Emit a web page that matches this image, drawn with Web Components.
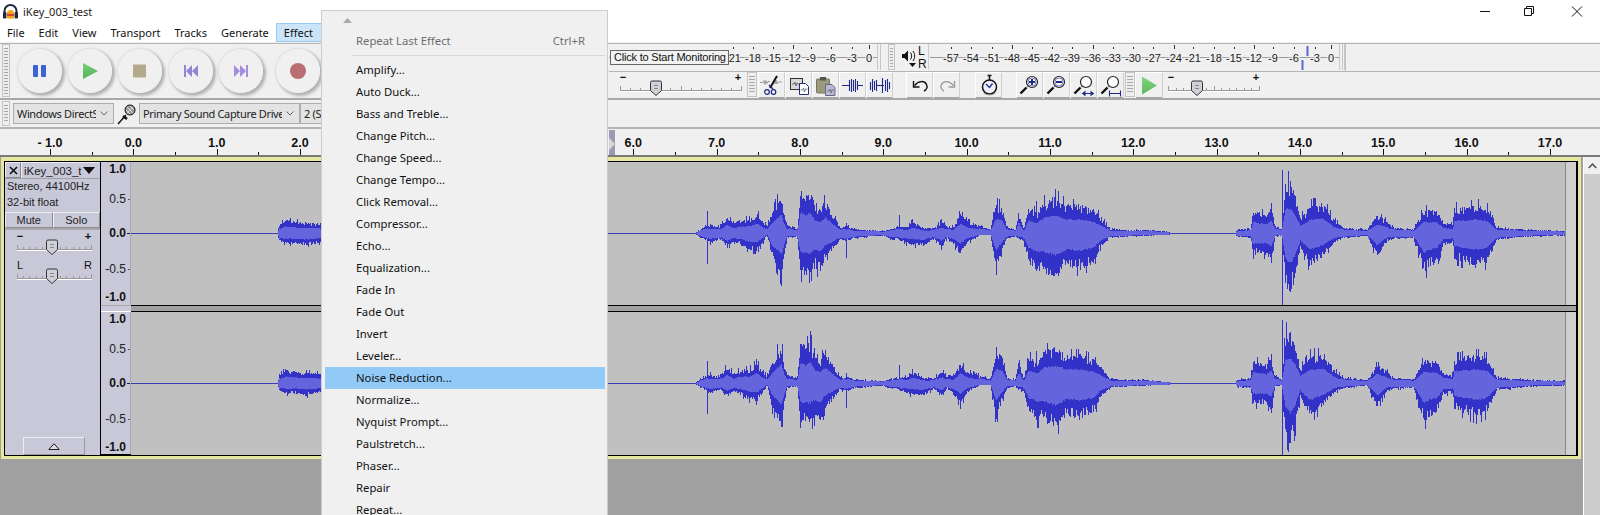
<!DOCTYPE html>
<html><head><meta charset="utf-8"><title>iKey_003_test</title>
<style>
html,body{margin:0;height:100%;overflow:hidden;background:#a0a0a0}
body{font-family:"Liberation Sans",sans-serif}
</style></head>
<body>
<au-app></au-app>
<script>
const UI='"Noto Sans","Open Sans",sans-serif';
const AR='"Liberation Sans",Arial,sans-serif';
class Base extends HTMLElement{
  constructor(){super();this.attachShadow({mode:'open'}).innerHTML=this.render();}
  render(){return '';}
  attr(n,d){return this.hasAttribute(n)?this.getAttribute(n):d;}
}
class AuGrip extends Base{render(){return `<style>
:host{display:block;box-sizing:border-box;width:8px;border:1px solid #c4c4c4;background:#f0f0f0 repeating-linear-gradient(180deg,#a8a8a8 0 1px,#ececec 1px 3px);background-clip:content-box;padding:2px 1px}
</style>`;}}
class AuTitlebar extends Base{render(){return `<style>
:host{display:flex;align-items:center;height:23px;background:#fff;font:11px ${UI};color:#222}
svg{display:block;margin:0 5px 0 3px}
.win{margin-left:auto;display:flex}
.win svg{margin:0;width:46px;height:23px}
</style>
<svg width="15" height="16" viewBox="0 0 15 16"><path d="M1.500 11V7a6 6 0 0 1 12 0v4" fill="none" stroke="#1c2742" stroke-width="2"/><rect x="0" y="8" width="3.400" height="6.500" rx="1.200" fill="#1c2742"/><rect x="11.600" y="8" width="3.400" height="6.500" rx="1.200" fill="#1c2742"/><path d="M4 14.500V9c0-2 1.500-3 3.500-3s3.500 1 3.500 3v5.500z" fill="#f6a21a"/><rect x="4" y="10" width="7" height="2" fill="#d8402a"/></svg>
<span>iKey_003_test</span>
<div class="win">
<svg viewBox="0 0 46 23"><path d="M18 11.500h10" stroke="#111"/></svg>
<svg viewBox="0 0 46 23"><path d="M16.500 8.500h7v7h-7zM18.500 8.500v-2h7v7h-2" fill="none" stroke="#111"/></svg>
<svg viewBox="0 0 46 23"><path d="M18 6.500l10 10M28 6.500l-10 10" stroke="#111" fill="none"/></svg>
</div>`;}}
class AuMenubar extends Base{render(){
  const it=['File','Edit','View','Transport','Tracks','Generate','Effect'];
  return `<style>
:host{display:flex;height:19px;background:#fff;font:11px ${UI};color:#111}
span{box-sizing:border-box;display:flex;align-items:center;height:19px;padding:0 7px}
span.on{background:#cce4f7;border:1px solid #99c9ef;padding:0 7px;width:46px}
</style>${it.map(t=>`<span class="${t==='Effect'?'on':''}">${t}</span>`).join('')}`;}}
class AuTransportBtn extends Base{render(){return `<style>
:host{display:block;width:44px;height:44px;border-radius:50%;background:radial-gradient(circle at 48% 48%,#f0f0f0 0 66%,#e8e8e8 82%,#dcdcdc 100%);box-shadow:2px 2px 3px 1px #b2b2b2,-1px -1px 2px #e2e2e2;position:relative}
::slotted(svg){position:absolute;left:0;top:0;width:44px;height:44px}
</style><slot></slot>`;}}
class AuTransport extends Base{render(){return `<style>
:host{display:flex;align-items:center;width:609px;flex:none;height:54px;box-sizing:border-box}
au-grip{height:53px;margin:0 8px 0 2px;align-self:flex-start}
au-transport-btn{margin-right:6px}
</style>
<au-grip></au-grip>
<au-transport-btn><svg viewBox="0 0 44 44"><rect x="15" y="16" width="5" height="12" rx=".8" fill="#3b62d6"/><rect x="23" y="16" width="5" height="12" rx=".8" fill="#3b62d6"/></svg></au-transport-btn>
<au-transport-btn><svg viewBox="0 0 44 44"><defs><linearGradient id="g" x1="0" y1="0" x2="0" y2="1"><stop offset="0" stop-color="#7bcf78"/><stop offset="1" stop-color="#52b257"/></linearGradient></defs><path d="M15 14l15 8-15 8z" fill="url(#g)"/></svg></au-transport-btn>
<au-transport-btn style="margin-right:7px"><svg viewBox="0 0 44 44"><rect x="15" y="15.500" width="13" height="13" fill="#b5a98c"/></svg></au-transport-btn>
<au-transport-btn><svg viewBox="0 0 44 44"><path d="M15 16h2v12h-2zM23 16v12l-6-6zM29 16v12l-6-6z" fill="#9184d4"/></svg></au-transport-btn>
<au-transport-btn style="margin-right:13px"><svg viewBox="0 0 44 44"><path d="M15 16v12l6-6zM21 16v12l6-6zM27 16h2v12h-2z" fill="#a48ce0"/></svg></au-transport-btn>
<au-transport-btn><svg viewBox="0 0 44 44"><circle cx="22" cy="22" r="8" fill="#b96f72"/></svg></au-transport-btn>`;}}
class AuMeter extends Base{render(){
  const w=+this.attr('w',260), labels=JSON.parse(this.attr('labels','[]'));
  let s='';
  labels.forEach(([t,x])=>{
    const maj=(parseInt(t)%12===0);
    s+=`<path d="M${x+.5} ${maj?1:3}v${maj?4:2}" stroke="#333"/>`;
  });
  labels.forEach(([t,x])=>{s+=`<text x="${x}" y="17.500" text-anchor="middle" paint-order="stroke" stroke="#f0f0f0" stroke-width="2.500">${t}</text>`;});
  const extra=this.attr('marks','');
  return `<style>:host{display:block;height:26px;flex:none;width:${w}px}svg{display:block}text{font:11px ${AR};fill:#222}</style>
<svg width="${w}" height="26"><path d="M0 13.500H${w}" stroke="#9a9a9a"/>${s}${extra}</svg>`;}}
class AuSlider extends Base{render(){
  const w=+this.attr('w',120),th=+this.attr('thumb',36),a=this.attr('a','−'),b=this.attr('b','+'),ins=+this.attr('ins',2),h=26,wt=this.attr('wt','bold');
  let t='';const n=12;for(let i=0;i<=n;i++){const x=Math.round(ins+i*(w-2*ins-1)/n)+.5;t+=`<path d="M${x} ${i%6==0?14:16}V18" stroke="#9a9a9a"/>`;}
  return `<style>:host{display:block;flex:none;width:${w}px;height:${h}px}svg{display:block}text{font:${wt} 11px ${AR};fill:#111}</style>
<svg width="${w}" height="${h}"><text x="${ins+3}" y="9" text-anchor="middle">${a}</text><text x="${w-ins-4}" y="9" text-anchor="middle">${b}</text>
<path d="M${ins} 18.500H${w-ins}" stroke="#9a9a9a"/><path d="M${ins} 19.500H${w-ins}" stroke="#fff"/>${t}
<path d="M${th-5.500} 10.500q0-1.500 1.500-1.500h8q1.500 0 1.500 1.500v8l-5.500 5-5.500-5z" fill="#cfcfd8" stroke="#333"/><path d="M${th-2} 13.500h4M${th-2} 16.500h4" stroke="#888"/></svg>`;}}
class AuToolBtn extends Base{render(){return `<style>
:host{display:block;flex:none;box-sizing:border-box;width:27px;height:27px;background:#f0f0f0;border-top:1px solid #fff;border-left:1px solid #fff;border-right:1px solid #cfcfcf;border-bottom:2px solid #a6a6a6}
::slotted(svg){display:block;width:25px;height:24px}
</style><slot></slot>`;}}
const NV='#1f2a86';
const glass=(inner,extra='')=>`<svg viewBox="0 0 25 24" fill="none"><path d="M3.500 20.500l6-6" stroke="#111" stroke-width="2.400"/><path d="M10 14l2 -2" stroke="#999" stroke-width="1.500"/><circle cx="15" cy="9" r="5.500" fill="#fff" stroke="#222" stroke-width="1.200"/>${inner}${extra}</svg>`;
class AuTools extends Base{render(){return `<style>
:host{display:flex;align-items:flex-start;height:27px;flex:none}
.sp{flex:none}
au-grip{height:25px;width:10px}
</style>
<div class="sp" style="width:10px"></div>
<au-slider w="124" thumb="37" ins="1"></au-slider>
<div class="sp" style="width:4px"></div>
<au-grip></au-grip>
<div class="sp" style="width:1px"></div>
<au-tool-btn><svg viewBox="0 0 25 24" fill="none"><path d="M1 9.500h3l1-2 1 4 1-4 1 3 1-2h2M15 8l1 3 1-4 1 4 1-2h4" stroke="#888" stroke-width=".8"/><path d="M18 3l-7 12" stroke="#111" stroke-width="2"/><path d="M10 12l4 4" stroke="${NV}" stroke-width="1.500"/><circle cx="8" cy="19" r="2.300" stroke="${NV}" stroke-width="1.200"/><circle cx="14.500" cy="19" r="2.300" stroke="${NV}" stroke-width="1.200"/></svg></au-tool-btn>
<au-tool-btn><svg viewBox="0 0 25 24"><rect x="4.500" y="5.500" width="12" height="11" fill="#d8d8d8" stroke="#333"/><path d="M6 11h2l1-2 1 4 1-3 1 1h3" stroke="#555" fill="none" stroke-width=".8"/><path d="M13.500 10.500h6l3 3v8h-9z" fill="#fff" stroke="${NV}"/><path d="M14.500 17h2l1-2 1 4 1-3h2" stroke="#566" fill="none" stroke-width=".8"/></svg></au-tool-btn>
<au-tool-btn><svg viewBox="0 0 25 24"><rect x="3.500" y="6" width="13" height="14" rx="1" fill="#9c9a7e" stroke="#77755f"/><rect x="7" y="4" width="6" height="3.500" fill="#55554a"/><path d="M12.500 11.500h6.500l3 3v8h-9.500z" fill="#b9b9cf" stroke="#66668a"/><path d="M14 18h2l1-2 1 4 1-3h2" stroke="#667" fill="none" stroke-width=".8"/></svg></au-tool-btn>
<au-tool-btn><svg viewBox="0 0 25 24" fill="none" stroke="${NV}"><path d="M2 12.500h7M17 12.500h6M9.500 7v11M11.500 6v13M13.500 7v11M15.500 6v13M17.500 8v9" stroke-width="1.100"/></svg></au-tool-btn>
<au-tool-btn><svg viewBox="0 0 25 24" fill="none" stroke="${NV}"><path d="M9 12.500h8" stroke-width="1.100"/><path d="M3.500 9v8M5.500 6v13M7.500 8v9M9.500 7v11M15.500 5v15M18.500 7v11M20.500 6v13M22.500 9v7" stroke-width="1.100"/></svg></au-tool-btn>
<div class="sp" style="width:13px"></div>
<au-tool-btn><svg viewBox="0 0 25 24" fill="none"><path d="M7.500 12.500c4-5 10-5 12-1 1.500 3-.5 5.500-2.500 6.500" stroke="#111" stroke-width="1.500"/><path d="M6.500 8v6h6" stroke="#111" stroke-width="1.400"/></svg></au-tool-btn>
<au-tool-btn><svg viewBox="0 0 25 24" fill="none"><path d="M19.500 12.500c-4-5-10-5-12-1-1.500 3 .5 5.500 2.500 6.500" stroke="#999" stroke-width="1.400"/><path d="M20.500 8v6h-6" stroke="#999" stroke-width="1.300"/></svg></au-tool-btn>
<div class="sp" style="width:15px"></div>
<au-tool-btn><svg viewBox="0 0 25 24" fill="none"><circle cx="13.500" cy="14" r="7" fill="#eef" stroke="#111" stroke-width="1.500"/><path d="M15.500 2.500h-4M13.500 3v4" stroke="#111" stroke-width="1.500"/><path d="M10 11l3.500 3.500 3-4" stroke="${NV}" stroke-width="1.300"/><path d="M7.500 20c3 2.500 9 2.500 12 0" stroke="#999"/></svg></au-tool-btn>
<div class="sp" style="width:14px"></div>
<au-tool-btn>${glass(`<path d="M12 9h6M15 6v6" stroke="${NV}" stroke-width="2"/><circle cx="15" cy="9" r="4" stroke="${NV}" stroke-width=".6" fill="none"/>`)}</au-tool-btn>
<au-tool-btn>${glass(`<path d="M12 9h6" stroke="${NV}" stroke-width="2"/><circle cx="15" cy="9" r="4" stroke="${NV}" stroke-width=".6" fill="none"/>`)}</au-tool-btn>
<au-tool-btn>${glass('',`<path d="M11 20.500h12" stroke="${NV}"/><path d="M11 20.500l3.500-3v6zM23 20.500l-3.500-3v6z" fill="${NV}" stroke="none"/>`)}</au-tool-btn>
<au-tool-btn>${glass('',`<path d="M11.500 20.500h11M11.500 17.500v6M22.500 17.500v6" stroke="${NV}" stroke-width="1.100"/>`)}</au-tool-btn>
<div class="sp" style="width:1px"></div>
<au-grip></au-grip>
<au-tool-btn style="width:28px"><svg viewBox="0 0 25 24"><defs><linearGradient id="p" x1="0" y1="0" x2="0" y2="1"><stop offset="0" stop-color="#84d680"/><stop offset="1" stop-color="#5ab85c"/></linearGradient></defs><path d="M6 3.500l15 9-15 9z" fill="url(#p)"/></svg></au-tool-btn>
<div class="sp" style="width:4px"></div>
<au-slider w="94" thumb="30" ins="1"></au-slider>`;}}
class AuMeterRow extends Base{render(){
  const recL=[['-21',124],['-18',144],['-15',164],['-12',184],['-9',202],['-6',222],['-3',243],['0',260]];
  const pl=[['-57',21],['-54',41],['-51',62],['-48',82],['-45',102],['-42',122],['-39',142],['-36',163],['-33',183],['-30',203],['-27',223],['-24',244],['-21',263],['-18',284],['-15',304],['-12',324],['-9',343],['-6',364],['-3',385],['0',401]];
  return `<style>
:host{display:flex;height:27px;flex:none;position:relative}
.tip{position:absolute;left:1px;top:6px;box-sizing:border-box;height:15px;width:119px;border:1px solid #666;background:#f2f2f2;font:11px ${AR};letter-spacing:-.2px;color:#111;line-height:13px;padding-left:3px;white-space:nowrap}
au-grip{height:26px}
.spk{flex:none;width:33px;height:26px;display:block}
.rest{flex:1;border-left:1px solid #c0c0c0}
.sep{width:1px;flex:none;background:#c8c8c8;height:26px}
</style>
<au-meter w="268" labels='${JSON.stringify(recL)}'></au-meter>
<div class="sep" style="margin-right:2px"></div><div class="sep" style="margin-right:7px"></div>
<au-grip style="width:7px;margin-right:2px"></au-grip>
<svg class="spk" viewBox="0 0 33 26"><path d="M5 10h2.500L11 6.500v11L7.500 14H5z" fill="#111"/><path d="M13.500 8.500c1.500 2 1.500 5 0 7M16 7c2.200 3 2.200 7 0 10" stroke="#111" fill="none"/><path d="M12 19h7l-3.500 4z" fill="#111"/><text x="21" y="11" font-family="Liberation Sans" font-size="12" fill="#111">L</text><text x="21" y="24" font-family="Liberation Sans" font-size="12" fill="#111">R</text><path d="M31.500 0v26" stroke="#ccc"/></svg>
<au-meter w="409" labels='${JSON.stringify(pl)}' marks='<path d="M377.500 2v10" stroke="#5c66d4" stroke-width="2"/><path d="M372.500 16v10" stroke="#5c66d4" stroke-width="2"/>'></au-meter>
<div class="sep" style="margin-right:2px"></div><div class="sep" style="margin-right:1px"></div><div class="sep"></div>
<div class="rest"></div>
<div class="tip">Click to Start Monitoring</div>`;}}
class AuCombo extends Base{render(){const w=this.attr('w','100');return `<style>
:host{display:flex;align-items:center;flex:none;box-sizing:border-box;width:${w}px;height:21px;background:#e3e3e3;border:1px solid #adadad;font:11px ${UI};letter-spacing:-.35px;color:#222;overflow:hidden;padding-left:3px;white-space:nowrap}
.t{flex:1;overflow:hidden}
svg{flex:none;margin:0 5px 0 4px}
</style><span class="t"><slot></slot></span><svg width="8" height="5" viewBox="0 0 8 5"><path d="M.5.500L4 4 7.500.500" fill="none" stroke="#666"/></svg>`;}}
class AuDevices extends Base{render(){return `<style>
:host{display:flex;align-items:center;height:27px;flex:none;border-bottom:2px solid #b4b4b4}
au-grip{height:25px;margin:0 3px 0 2px}
svg{flex:none;margin:0 3px}
</style>
<au-grip></au-grip>
<au-combo w="101">Windows DirectS</au-combo>
<svg width="19" height="22" viewBox="0 0 19 22"><path d="M1 21l8-9" stroke="#111" stroke-width="1.400"/><path d="M6 13l4 3" stroke="#111" stroke-width="2.600"/><circle cx="13" cy="7" r="5" fill="#999" stroke="#111"/><path d="M10 4l6 6M13 3l4 4M9 7l4 4M10 10l6-6" stroke="#eee" stroke-width=".7"/></svg>
<au-combo w="161">Primary Sound Capture Drive</au-combo>
<au-combo w="100">2 (S</au-combo>`;}}
class AuToolbars extends Base{render(){return `<style>
:host{display:block;background:#f0f0f0;padding-top:1px;overflow:hidden}
.top{display:flex;height:54px;border-top:1px solid #b4b4b4;border-bottom:2px solid #a8a8a8}
.rs{flex:1;display:flex;flex-direction:column}
.rs>au-meter-row{border-bottom:1px solid #b4b4b4}
</style>
<div class="top"><au-transport></au-transport><div class="rs"><au-meter-row></au-meter-row><au-tools></au-tools></div></div>
<au-devices></au-devices>`;}}
class AuRuler extends Base{render(){
  const o=133.33,s=83.33;let p='',t='';
  for(let i=-2;i<=36;i++){const x=Math.round(o+i*s/2)+.5;if(x<0||x>1590)continue;p+=`M${x} ${i%2?23:20}V26`;}
  for(let v=-1;v<=17;v++){if(v>=3&&v<=5)continue;const lab=v<0?'- 1.0':v.toFixed(1);t+=`<text x="${o+v*s}" y="18" text-anchor="middle">${lab}</text>`;}
  return `<style>:host{display:block;height:26px;background:#f0f0f0;border-bottom:2px solid #7a7a7a;position:relative}
svg{display:block}text{font:bold 12.500px ${AR};fill:#111}
.m{position:absolute;left:609px;top:1px;width:6px;height:25px;display:block}
</style><svg width="1600" height="26"><path d="${p}" stroke="#111"/>${t}</svg><svg class="m" viewBox="0 0 6 25"><rect width="6" height="25" fill="#9a9ab4"/><path d="M0 8l6 6-6 6z" fill="#d8d8d8"/></svg>`;}}
const D7=[[285,247,247],[300,235,258],[312,228,262],[330,220,280],[345,226,268],[360,225,265],[380,195,290],[400,218,272],[420,205,280],[445,205,295],[470,185,300],[490,215,270],[500,225,250],[515,185,320],[530,150,350],[543,128,380],[552,190,310],[560,220,260],[590,235,255],[601,115,370],[615,135,372],[630,115,370],[645,170,350],[660,175,365],[675,145,320],[695,185,300],[720,230,265],[738,225,272],[760,235,260],[800,238,256],[850,240,252],[870,235,262],[890,230,262],[925,225,280],[935,212,280],[970,230,285],[1000,232,262],[1025,210,290],[1040,228,260],[1060,225,280],[1080,185,310],[1100,210,275],[1140,225,250],[1170,235,250],[1187,155,355],[1205,165,300],[1220,230,260],[1245,235,255],[1255,180,265],[1270,235,270],[1285,165,340],[1310,185,360],[1330,150,360],[1365,135,385],[1400,160,345],[1440,160,355],[1480,175,335]];
const D8=[[0,195,290],[30,235,258],[100,238,254],[150,238,252],[205,243,250],[210,247,247],[405,247,247],[410,236,256],[450,234,258],[458,178,310],[500,190,310],[512,165,330],[525,225,255],[544,235,250],[555,95,400],[570,85,435],[585,130,380],[600,200,290],[630,160,350],[670,155,315],[700,205,275],[730,230,260],[800,237,252],[830,190,320],[860,210,270],[880,230,262],[940,235,260],[970,175,365],[1010,180,335],[1030,215,280],[1058,220,275],[1062,170,325],[1130,160,350],[1160,170,335],[1190,230,265],[1300,238,254],[1400,240,252]];
const KEY=[[277,0,0],[279,-8,8],[285,-14,10],[295,-12,10],[305,-11,12],[320,-10,9],[323,0,0],[694,0,0]];
D7.forEach(([x,a,b])=>KEY.push([600+x/3,(a-247)/3,(b-247)/3]));
D8.forEach(([x,a,b])=>KEY.push([1100+x/3,(a-247)/3,(b-247)/3]));
const SPIKES=[[707,-22,31],[846,-10,25],[899,-18,7],[1027,-12,14],[1282,-63,72],[1271,-29,30],[1036,-32,37]];
class AuWave extends Base{render(){
  let seed=+this.attr('seed',7);
  const rnd=()=>{seed=(seed*16807)%2147483647;return seed/2147483647;};
  const X0=131,W=1436,C=71,H=143;
  let dark='',light='';
  let k=0;
  for(let x=277;x<1567;x++){
    while(k<KEY.length-2&&KEY[k+1][0]<=x)k++;
    const [x1,a1,b1]=KEY[k],[x2,a2,b2]=KEY[k+1];
    const f=Math.min(1,Math.max(0,(x-x1)/(x2-x1||1)));
    const a0=a1+(a2-a1)*f,b0=b1+(b2-b1)*f;
    const sp=()=>{const r=rnd();return r<.12?1.18:r<.4?.68+.15*rnd():.84+.16*rnd();};
    const a=a0*sp(),b=b0*sp();
    if(-a0<.6&&b0<.6)continue;
    const big=Math.max(-a0,b0);
    const r=big>8?.47:.62;
    const ra=a0*r*(.93+.1*rnd()),rb=b0*r*(.93+.1*rnd());
    const px=x-X0+.5;
    dark+=`M${px} ${(C+a).toFixed(0)}V${(C+b+1).toFixed(0)}`;
    light+=`M${px} ${(C+ra).toFixed(0)}V${(C+rb+1).toFixed(0)}`;
  }
  SPIKES.forEach(([x,a,b])=>{dark+=`M${x-X0+.5} ${C+a}V${C+b}`;});
  return `<style>:host{display:block;height:${H}px;background:#c0c0c0;position:relative;overflow:hidden}svg{display:block}</style>
<svg width="${W}" height="${H}" shape-rendering="crispEdges"><path d="M0 ${C}.500H${W-1}" stroke="#3c3cb4"/><path d="${dark}" stroke="#3232c8"/><path d="${light}" stroke="#6464dc"/></svg>`;}}
class AuVRuler extends Base{render(){return `<style>
:host{display:block;position:relative;height:143px;width:30px;background:#c8c8d8;overflow:hidden}
svg{display:block}
text{font:12px ${AR};fill:#222;text-anchor:end}
.b{font-weight:bold;fill:#111}
</style><svg width="30" height="143"><text class="b" x="25" y="11">1.0</text><text x="25" y="41">0.5</text><path d="M27 37.500h3" stroke="#555"/>
<text class="b" x="25" y="75">0.0</text><path d="M26 71.500h4" stroke="#222"/><text x="25" y="111">-0.5</text><path d="M27 107.500h3" stroke="#555"/><text class="b" x="25" y="139">-1.0</text><path d="M29.500 0V143" stroke="#a8a8a8"/></svg>`;}}
class AuTrackInfo extends Base{render(){return `<style>
:host{display:flex;flex-direction:column;background:#c8c8d8;width:95px;height:293px;font:11px ${AR};color:#222;position:relative}
.title{display:flex;height:16px;border-bottom:1px solid #a0a0a8}
.x{box-sizing:border-box;width:16px;border:1px solid #eee;border-right-color:#888;border-bottom-color:#888;display:flex;align-items:center;justify-content:center}
.name{flex:1;display:flex;align-items:center;padding-left:2px;font-size:11.500px;border-top:1px solid #eee;border-left:1px solid #eee;box-sizing:border-box;justify-content:space-between;padding-right:5px}
.l{height:16px;line-height:15px;padding-left:2px}
.ms{display:flex;height:16px;margin-top:1px;border-bottom:2px solid #a8a8a8}
.ms span{flex:1;box-sizing:border-box;text-align:center;line-height:14px;border:1px solid #eee;border-right-color:#8c8c8c;border-bottom-color:#8c8c8c}
au-slider{margin:1px 0 0 11px;height:26px}
.col{margin-top:auto;align-self:flex-start;margin-left:18px;box-sizing:border-box;width:62px;height:18px;border:1px solid #eee;border-right-color:#999;border-bottom-color:#999;display:flex;align-items:center;justify-content:center}
</style>
<div class="title"><span class="x"><svg width="9" height="9" viewBox="0 0 9 9"><path d="M1 1l7 7M8 1L1 8" stroke="#111" stroke-width="1.600"/></svg></span><span class="name">iKey_003_t<svg width="12" height="7" viewBox="0 0 12 7"><path d="M0 0h12L6 7z" fill="#111"/></svg></span></div>
<div class="l">Stereo, 44100Hz</div><div class="l">32-bit float</div>
<div class="ms"><span>Mute</span><span>Solo</span></div>
<au-slider w="77" thumb="36" ins="1"></au-slider>
<au-slider w="77" thumb="36" ins="1" a="L" b="R" wt="normal" style="margin-top:3px"></au-slider>
<div class="col"><svg width="12" height="7" viewBox="0 0 12 7"><path d="M.8 6.500L6 .8l5.200 5.700z" fill="#ddd" stroke="#222"/></svg></div>`;}}
class AuTracks extends Base{render(){return `<style>
:host{display:flex;height:359px;background:#a0a0a0}
.main{flex:1;min-width:0;padding:0 2px 0 1px}
.y{box-sizing:border-box;height:302px;border:3px solid #e6e69c;border-top-width:4px}
.box{display:flex;box-sizing:border-box;height:295px;border:1px solid #000;border-width:1px 2px 2px 1px;background:#000}
.v{flex:none;width:30px;display:flex;flex-direction:column;margin-left:1px;background:#c8c8d8}
.w{flex:1;min-width:0;display:flex;flex-direction:column}
.sepv{height:7px;flex:none;border-top:1px solid #a8a8a8;border-bottom:1px solid #fff;background:#c8c8d8;box-sizing:border-box}
.sepw{height:7px;flex:none;background:#a0a0a0;border-bottom:1px solid #000;border-top:1px solid #000;box-sizing:border-box}
.wr{display:flex}
.wr au-wave{flex:1;min-width:0}
.strip{width:10px;flex:none;background:#cfcfcf;border-left:1px solid #888}
.sb{width:16px;flex:none;border-left:1px solid #fff;background:#cdcdcd}
.up{height:17px;background:#f0f0f0;display:flex;align-items:center;justify-content:center}
</style>
<div class="main"><div class="y"><div class="box">
<au-track-info></au-track-info>
<div class="v"><au-v-ruler></au-v-ruler><div class="sepv"></div><au-v-ruler></au-v-ruler></div>
<div class="w"><div class="wr"><au-wave seed="11"></au-wave><div class="strip"></div></div><div class="sepw"></div><div class="wr"><au-wave seed="29"></au-wave><div class="strip"></div></div></div>
</div></div></div>
<div class="sb"><div class="up"><svg width="9" height="6" viewBox="0 0 9 6"><path d="M.7 5L4.500 1.200 8.300 5" fill="none" stroke="#555" stroke-width="1.600"/></svg></div></div>`;}}
class AuMenuItem extends Base{render(){return `<style>
:host{display:flex;align-items:center;justify-content:space-between;flex:none;box-sizing:border-box;height:22px;padding:0 20px 2px 31px;margin:0 2px 0 3px;font:11.300px ${UI};color:#111;white-space:nowrap}
:host([disabled]){color:#6d6d6d}
:host([hot]){background:#91c9f7}
</style><slot></slot><slot name="k"></slot>`;}}
class AuEffectMenu extends Base{render(){
  const it=['Amplify...','Auto Duck...','Bass and Treble...','Change Pitch...','Change Speed...','Change Tempo...','Click Removal...','Compressor...','Echo...','Equalization...','Fade In','Fade Out','Invert','Leveler...','Noise Reduction...','Normalize...','Nyquist Prompt...','Paulstretch...','Phaser...','Repair','Repeat...'];
  return `<style>
:host{position:absolute;left:321px;top:10px;width:287px;height:505px;box-sizing:border-box;background:#f0f0f0;border:1px solid #ccc;border-bottom:0;overflow:hidden;display:flex;flex-direction:column}
.arrow{height:19px;flex:none;padding-left:21px;display:flex;align-items:center}
.sep{height:7px;flex:none;box-sizing:border-box;margin:0 2px 0 30px;display:flex;align-items:center}
.sep i{display:block;height:1px;width:100%;background:#d7d7d7}
</style>
<div class="arrow"><svg width="9" height="5" viewBox="0 0 9 5"><path d="M0 5L4.500 0 9 5z" fill="#a8a8a8"/></svg></div>
<au-menu-item disabled>Repeat Last Effect<span slot="k">Ctrl+R</span></au-menu-item>
<div class="sep"><i></i></div>
${it.map(t=>`<au-menu-item ${t.startsWith('Noise')?'hot':''}>${t}</au-menu-item>`).join('')}`;}}
class AuApp extends Base{render(){return `<style>
:host{display:block;position:relative;width:1600px;height:515px;overflow:hidden;background:#a0a0a0}
</style>
<au-titlebar></au-titlebar><au-menubar></au-menubar><au-toolbars></au-toolbars><au-ruler></au-ruler><au-tracks></au-tracks><au-effect-menu></au-effect-menu>`;}}
const reg={'au-grip':AuGrip,'au-titlebar':AuTitlebar,'au-menubar':AuMenubar,'au-transport-btn':AuTransportBtn,'au-transport':AuTransport,'au-meter':AuMeter,'au-slider':AuSlider,'au-tool-btn':AuToolBtn,'au-tools':AuTools,'au-meter-row':AuMeterRow,'au-combo':AuCombo,'au-devices':AuDevices,'au-toolbars':AuToolbars,'au-ruler':AuRuler,'au-wave':AuWave,'au-v-ruler':AuVRuler,'au-track-info':AuTrackInfo,'au-tracks':AuTracks,'au-menu-item':AuMenuItem,'au-effect-menu':AuEffectMenu,'au-app':AuApp};
for(const k in reg)customElements.define(k,reg[k]);
</script>
</body></html>
